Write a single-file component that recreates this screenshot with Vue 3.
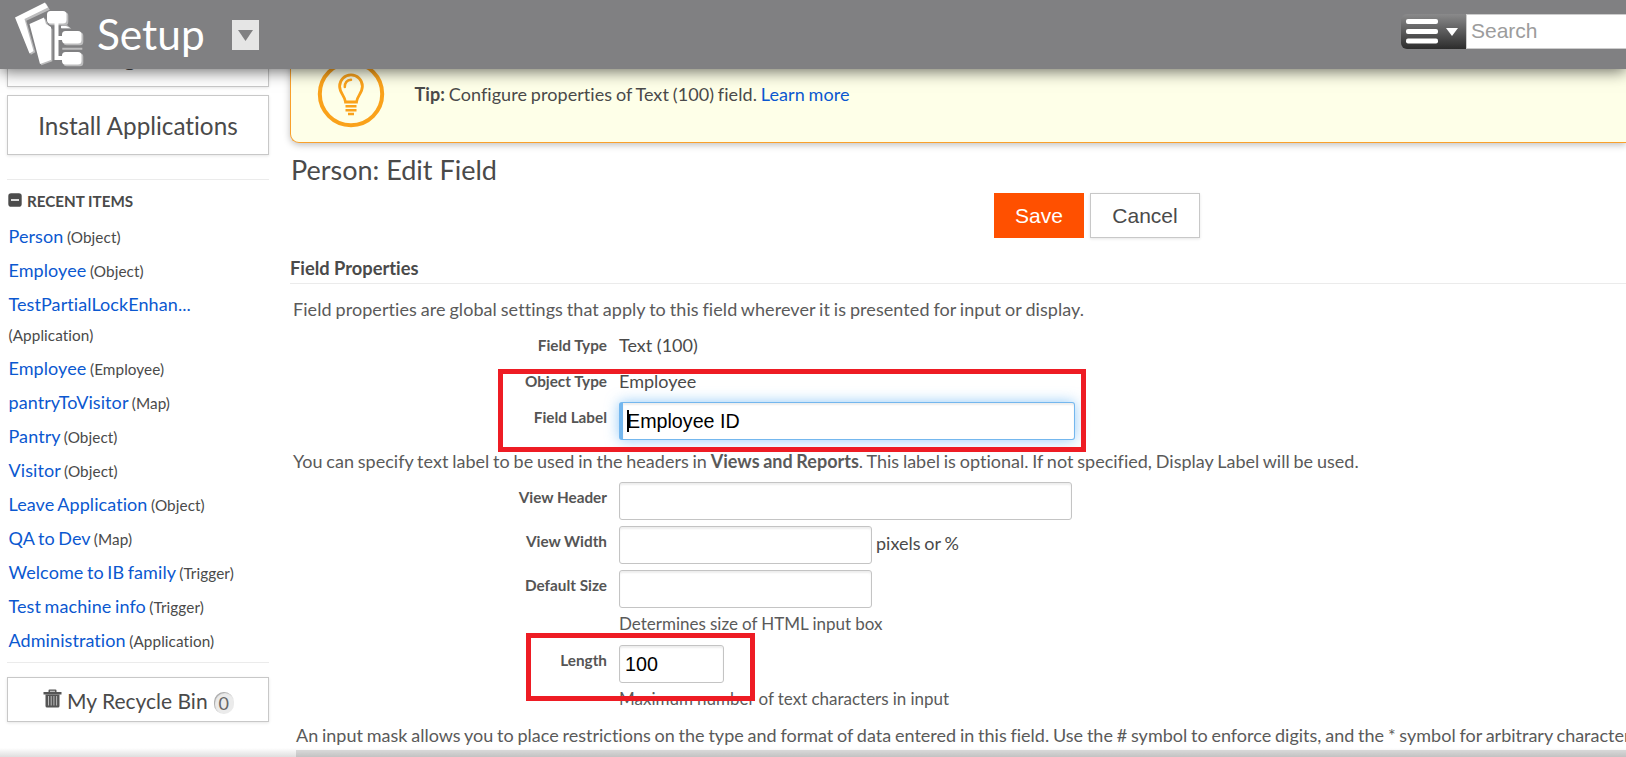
<script setup>
const recent = [
  { name: 'Person', type: 'Object' },
  { name: 'Employee', type: 'Object' },
  { name: 'TestPartialLockEnhan...', type: 'Application', wrap: true },
  { name: 'Employee', type: 'Employee' },
  { name: 'pantryToVisitor', type: 'Map' },
  { name: 'Pantry', type: 'Object' },
  { name: 'Visitor', type: 'Object' },
  { name: 'Leave Application', type: 'Object' },
  { name: 'QA to Dev', type: 'Map' },
  { name: 'Welcome to IB family', type: 'Trigger' },
  { name: 'Test machine info', type: 'Trigger' },
  { name: 'Administration', type: 'Application' },
]
</script>

<template>
  <div class="page">
    <header class="topbar">
      <svg class="logo" width="90" height="69" viewBox="0 0 90 69">
        <g fill="#bcbcbd" transform="translate(1.3 1.3)">
          <path d="M15 17.5L45 2.5L48.5 8.5L25 19.5L34 51L29.500 53.500Z" />
          <path d="M29.500 24L44 17.500L47 24L51 28V60L40 64Z" />
          <rect x="47" y="11" width="20" height="13" rx="3.500" />
          <rect x="62" y="31" width="20" height="13" rx="3.500" />
          <rect x="62" y="52" width="20" height="13" rx="3.500" />
          <path d="M60 24H66L70 27.500H60ZM61 46.500H81V48.500H61Z" />
        </g>
        <g fill="#fff">
          <path d="M15 17.500L45 2.500L48 7.500L24.500 19L33.500 51L29.500 53.500Z" />
          <path d="M29.500 24L44 17.500L46 24L51 27V60L40 64Z" />
          <rect x="47" y="11" width="19.500" height="12.500" rx="3.500" />
          <path d="M54.500 22H58.500V36H63V40H58.500V56H63V60H54.500Z" />
          <path d="M61 26H66L70 28H61Z" />
          <rect x="62" y="31" width="19.500" height="12.500" rx="3.500" />
          <rect x="62" y="52" width="19.500" height="12.500" rx="3.500" />
        </g>
      </svg>
      <span class="brand">Setup</span>
      <span class="drop">
        <svg width="15" height="11" viewBox="0 0 15 11"><path d="M0 0H15L7.500 11Z" fill="#808082" /></svg>
      </span>
      <div class="search">
        <div class="menu">
          <svg width="65" height="35" viewBox="0 0 65 35">
            <g fill="#fff">
              <rect x="5" y="5" width="32" height="5" rx="2" />
              <rect x="5" y="15" width="32" height="5" rx="2" />
              <rect x="5" y="24.500" width="32" height="5" rx="2" />
              <path d="M45 14H57L51 22Z" />
            </g>
          </svg>
        </div>
        <div class="query">Search</div>
      </div>
    </header>

    <div class="body">
      <aside>
        <div class="side-btn nudge">Configuration</div>
        <div class="side-btn">Install Applications</div>
        <div class="rule"></div>
        <div class="recent-head">
          <svg width="14" height="14" viewBox="0 0 14 14">
            <rect x="0.300" y="0.300" width="13.400" height="13.400" rx="2.800" fill="#4c4c4c" />
            <rect x="3" y="6" width="8" height="2" fill="#ddd" />
          </svg>
          <span>RECENT ITEMS</span>
        </div>
        <div v-for="(r, i) in recent" :key="i" class="item" :class="{ tall: r.wrap }">
          <a>{{ r.name }}</a> <small>({{ r.type }})</small>
        </div>
        <div class="rule last"></div>
        <div class="bin">
          <svg width="19" height="19" viewBox="0 0 19 19">
            <path d="M0.500 3H5.500V1.500Q5.500 0.500 6.500 0.500H12.500Q13.500 0.500 13.500 1.500V3H18.500V5.500H0.500Z" fill="#555" />
            <rect x="7" y="1.700" width="5" height="1.300" fill="#bbb" />
            <path d="M2.500 5.500H16.500V17Q16.500 18.500 15 18.500H4Q2.500 18.500 2.500 17Z" fill="#555" />
            <path d="M5.500 7V16.500M8.200 7V16.500M10.900 7V16.500M13.600 7V16.500" stroke="#bbb" stroke-width="1" />
          </svg>
          <span class="bin-text">My Recycle Bin</span>
          <span class="count">0</span>
        </div>
      </aside>

      <main>
        <div class="tip">
          <svg width="68" height="68" viewBox="0 0 68 68" fill="none" stroke="#faa21b">
            <circle cx="34" cy="34" r="31.200" stroke-width="4" />
            <path d="M28.500 42C28 36 22.600 33 22.600 26.300A11.400 11.400 0 0 1 45.400 26.300C45.400 33 40 36 39.500 42Z" stroke-width="2.800" />
            <path d="M27.800 27Q27.800 20.500 34 19.800" stroke-width="2.500" stroke-linecap="round" />
            <path d="M28.500 46.200H39.500M28.500 50.200H39.500M31 54H37" stroke-width="2.600" />
          </svg>
          <p><b>Tip:</b> Configure properties of Text (100) field. <a>Learn more</a></p>
        </div>
        <h1>Person: Edit Field</h1>
        <div class="actions">
          <button class="save">Save</button>
          <button class="cancel">Cancel</button>
        </div>
        <h2>Field Properties</h2>
        <p class="desc d1">Field properties are global settings that apply to this field wherever it is presented for input or display.</p>

        <div class="row plain first"><label>Field Type</label><span>Text (100)</span></div>
        <div class="marked">
          <div class="row plain"><label>Object Type</label><span>Employee</span></div>
          <div class="row focus-row"><label>Field Label</label><div class="input focus"><i class="caret"></i>Employee ID</div></div>
          <div class="mark m1"></div>
        </div>
        <p class="desc d2">You can specify text label to be used in the headers in <b>Views and Reports</b>. This label is optional. If not specified, Display Label will be used.</p>
        <div class="row"><label>View Header</label><div class="input wide"></div></div>
        <div class="row"><label>View Width</label><div class="input mid"></div><span class="unit">pixels or %</span></div>
        <div class="row"><label>Default Size</label><div class="input mid"></div></div>
        <p class="hint h1">Determines size of HTML input box</p>
        <div class="marked">
          <div class="row"><label>Length</label><div class="input short">100</div></div>
          <p class="hint">Maximum number of text characters in input</p>
          <div class="mark m2"></div>
        </div>
        <p class="desc d3">An input mask allows you to place restrictions on the type and format of data entered in this field. Use the # symbol to enforce digits, and the * symbol for arbitrary characters.</p>
        <div class="band"></div>
      </main>
    </div>
    <div class="fade"></div>
  </div>
</template>

<style>
html,
body {
  overflow: hidden;
}
</style>

<style scoped>
* {
  box-sizing: border-box;
}
.page {
  position: relative;
  width: 1626px;
  height: 757px;
  overflow: hidden;
  background: #fff;
  font-family: Lato, 'Liberation Sans', sans-serif;
  font-size: 18px;
  font-variant-ligatures: none;
  color: #4a4a4a;
}
p,
h1,
h2 {
  margin: 0;
  white-space: nowrap;
}
a {
  color: #0b58d0;
}
.topbar {
  position: relative;
  z-index: 2;
  display: flex;
  height: 69px;
  background: #808082;
  box-shadow: 0 2px 15px rgba(0, 0, 0, 0.6);
}
.brand {
  width: 134px;
  padding-left: 7px;
  font-size: 42.4px;
  line-height: 68px;
  color: #fff;
}
.drop {
  display: flex;
  align-items: center;
  justify-content: center;
  width: 27px;
  height: 30px;
  margin: 20px 0 0 8px;
  background: #e5e5e5;
}
.search {
  display: flex;
  width: 225px;
  height: 35px;
  margin: 14px 0 0 auto;
}
.menu {
  width: 65px;
  border-radius: 6px 0 0 6px;
  background: linear-gradient(#8a8a8b, #2c2c2c);
}
.query {
  flex: 1;
  padding-left: 4px;
  border: 1px solid #ccc;
  border-right: 0;
  background: #fff;
  font: 21px/32px 'Liberation Sans', sans-serif;
  color: #9c9c9c;
}
.body {
  display: flex;
  gap: 21px;
  margin-top: -42px;
  padding-left: 7px;
}
aside {
  width: 262px;
}
.side-btn {
  height: 60px;
  margin-bottom: 8px;
  border: 1px solid #c8c8c8;
  box-shadow: 0 1px 3px rgba(0, 0, 0, 0.1);
  font-size: 24.3px;
  line-height: 60px;
  text-align: center;
}
.nudge {
  padding-left: 2px;
  line-height: 58px;
}
.rule {
  height: 1px;
  margin-top: 24px;
  background: #ebebeb;
}
.recent-head {
  display: flex;
  height: 41px;
  padding: 13px 0 0 1px;
  gap: 5px;
  font-size: 15.2px;
  font-weight: 700;
  line-height: 17px;
}
.item {
  height: 34px;
  padding: 0 1.5px;
  letter-spacing: 0.08px;
  word-spacing: -1.1px;
  line-height: 30px;
  white-space: nowrap;
}
.item.tall {
  width: 200px;
  height: 64px;
  white-space: normal;
}
.item small {
  font-size: 15.3px;
}
.rule.last {
  margin-top: 3px;
}
.bin {
  display: flex;
  height: 45px;
  margin-top: 14px;
  padding: 11px 0 0 35px;
  border: 1px solid #c8c8c8;
  box-shadow: 0 1px 3px rgba(0, 0, 0, 0.1);
}
.bin-text {
  margin-left: 5px;
  font-size: 21px;
  line-height: 23px;
}
.count {
  width: 20px;
  height: 22px;
  margin: 3px 0 0 6px;
  border-radius: 10px;
  background: #ebebeb;
  box-shadow: inset 1px 1px 1px #aaa;
  font-size: 18px;
  line-height: 22px;
  text-align: center;
  color: #666;
}
main {
  flex: 1;
  min-width: 0;
  margin-top: 18px;
}
.tip {
  display: flex;
  align-items: center;
  height: 98px;
  padding-left: 26px;
  border: 1px solid #f9a02c;
  border-right: 0;
  border-radius: 9px 0 0 9px;
  background: #feffe8;
  box-shadow: 0 2px 7px rgba(0, 0, 0, 0.25);
}
.tip p {
  margin-left: 29.5px;
  letter-spacing: 0.06px;
  word-spacing: -0.8px;
}
h1 {
  margin-top: 9px;
  padding-left: 1px;
  font-size: 27px;
  font-weight: 400;
  line-height: 36px;
}
.actions {
  display: flex;
  gap: 6px;
  height: 45px;
  margin: 5px 0 0 704px;
}
button {
  padding: 0;
  font: 21px 'Liberation Sans', sans-serif;
}
.save {
  width: 90px;
  border: 0;
  background: #ff5000;
  color: #fff;
}
.cancel {
  width: 110px;
  border: 1px solid #c8c8c8;
  background: #fff;
  box-shadow: 0 1px 3px rgba(0, 0, 0, 0.1);
  color: #4a4a4a;
}
h2 {
  height: 31px;
  margin-top: 15px;
  border-bottom: 1px solid #ebebeb;
  font-size: 18.3px;
  line-height: 30px;
}
.desc {
  line-height: 24px;
  color: #5a5a5a;
}
.d1 {
  margin: 13px 0 6px 3px;
  letter-spacing: 0.065px;
  word-spacing: -0.8px;
}
.d2 {
  margin: 9px 0 9px 3px;
  letter-spacing: 0.01px;
  word-spacing: -0.8px;
}
.d3 {
  margin: 12px 0 3px 6px;
  word-spacing: -0.8px;
}
.row {
  display: flex;
  height: 38px;
  margin-bottom: 6px;
}
.row label {
  width: 317px;
  margin-right: 12px;
  font-size: 15.3px;
  font-weight: 700;
  line-height: 30px;
  text-align: right;
  color: #555;
}
.plain {
  height: 36px;
  margin: 0;
  line-height: 36px;
}
.plain label {
  line-height: 36px;
}
.focus-row {
  margin: 3px 0 0;
}
.input {
  width: 456px;
  height: 38px;
  padding-left: 5px;
  border: 1px solid #c4c4c4;
  border-radius: 3px;
  background: #fff;
  box-shadow: inset 0 2px 2px #eee;
  font: 19.7px/37px 'Liberation Sans', sans-serif;
  color: #000;
}
.focus {
  display: flex;
  align-items: center;
  padding-left: 4px;
  border-color: #74b7ee;
  border-left-width: 4px;
  box-shadow: inset 0 2px 2px #eee, 0 0 14px rgba(90, 175, 245, 0.65);
}
.caret {
  width: 2px;
  height: 22px;
  margin-right: -2px;
  background: #000;
}
.wide {
  width: 453px;
}
.mid {
  width: 253px;
}
.short {
  width: 105px;
}
.unit {
  margin-left: 4px;
  line-height: 34px;
  word-spacing: -0.8px;
}
.hint {
  margin-left: 329px;
  font-size: 17px;
  line-height: 24px;
  word-spacing: -0.2px;
  color: #5a5a5a;
}
.h1 {
  margin-top: -2px;
  margin-bottom: 9px;
}
.marked {
  position: relative;
}
.marked .hint {
  margin-top: -2px;
}
.mark {
  position: absolute;
  border: 5px solid #ee1c24;
}
.m1 {
  left: 208px;
  top: 6px;
  width: 588px;
  height: 83px;
}
.m2 {
  left: 236px;
  top: -12px;
  width: 229px;
  height: 68px;
}
.band {
  height: 20px;
  margin-left: 6px;
  background: #dfdfdf;
}
.fade {
  position: absolute;
  left: 0;
  bottom: 0;
  width: 100%;
  height: 9px;
  background: linear-gradient(rgba(0, 0, 0, 0), rgba(0, 0, 0, 0.13));
}
</style>
